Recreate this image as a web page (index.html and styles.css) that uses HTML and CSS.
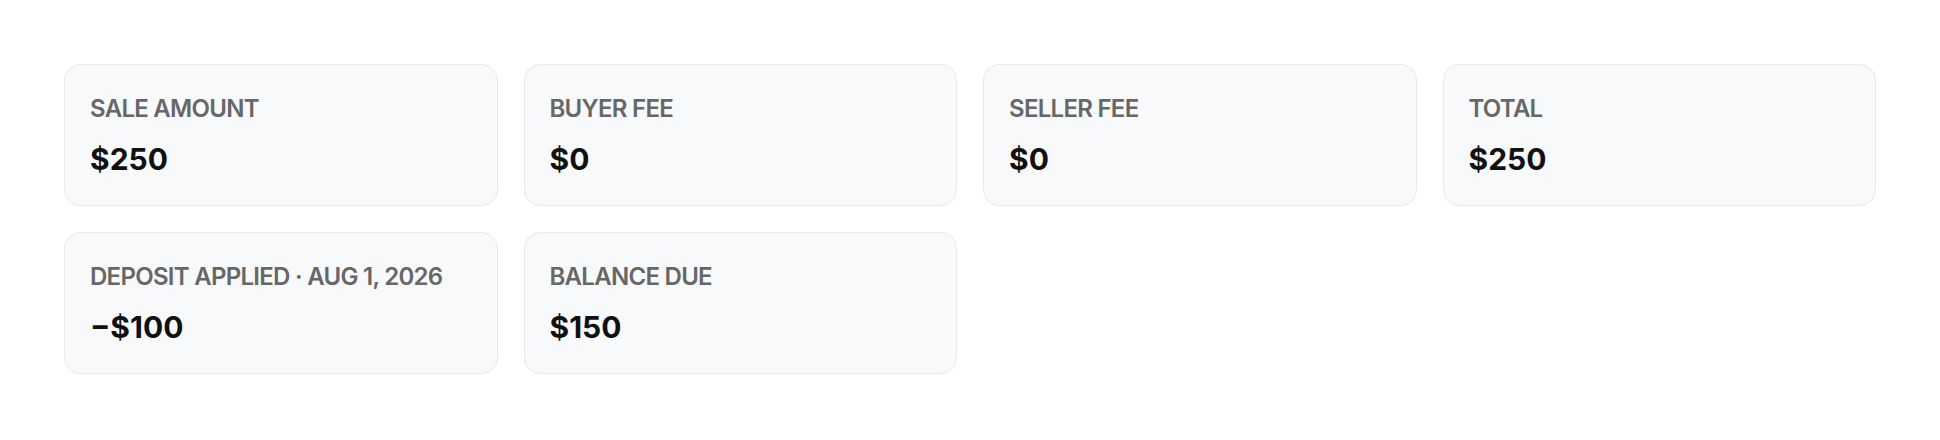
FILE: index.html
```html
<!DOCTYPE html>
<html lang="en">

<head>
    <meta charset="UTF-8">
    <meta name="viewport" content="width=device-width, initial-scale=1.0">
    <title>Settlement</title>
    <link rel="stylesheet" href="styles.css">
</head>

<body>
    <div class="resumo">
        <div class="cartao">
            <div class="rotulo">SALE AMOUNT</div>
            <div class="valor">$250</div>
        </div>
        <div class="cartao">
            <div class="rotulo">BUYER FEE</div>
            <div class="valor">$0</div>
        </div>
        <div class="cartao">
            <div class="rotulo">SELLER FEE</div>
            <div class="valor">$0</div>
        </div>
        <div class="cartao">
            <div class="rotulo">TOTAL</div>
            <div class="valor">$250</div>
        </div>
        <div class="cartao">
            <div class="rotulo">DEPOSIT APPLIED · AUG 1, 2026</div>
            <div class="valor">−$100</div>
        </div>
        <div class="cartao">
            <div class="rotulo">BALANCE DUE</div>
            <div class="valor">$150</div>
        </div>
    </div>
</body>

</html>
```

FILE: styles.css
```css
body {
    margin: 0;
    background-color: #fff;
    font-family: Inter, "Noto Sans", sans-serif;
}

.resumo {
    display: grid;
    grid-template-columns: repeat(4, 1fr);
    gap: 26px;
    padding: 64px;
}

.cartao {
    height: 142px;
    box-sizing: border-box;
    padding: 29px 25px 0;
    background-color: #f8f9fb;
    border: 1.5px solid #e8e9ec;
    border-radius: 16px;
}

.rotulo {
    font-size: 24px;
    font-weight: 600;
    letter-spacing: -0.03em;
    color: #676767;
    line-height: 30px;
}

.valor {
    margin-top: 17px;
    font-size: 30px;
    font-weight: 700;
    color: #111;
    line-height: 36px;
}
```
